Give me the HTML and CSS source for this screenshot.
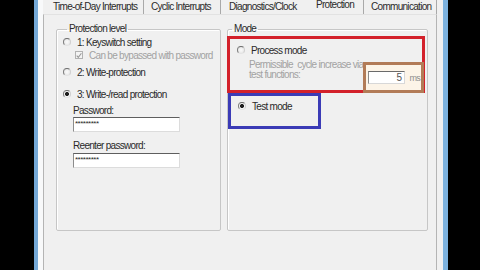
FILE: index.html
```html
<!DOCTYPE html>
<html lang="en">
<head>
    <meta charset="UTF-8">
    <title>Properties - Protection</title>
    <link rel="stylesheet" href="styles.css">
</head>
<body>

    <div class="window">
        <div class="gutter"></div>
        <div class="tabctl">
            <div class="tabs">
                <div class="tab tab-time">Time-of-Day Interrupts</div>
                <div class="tab tab-cyclic">Cyclic Interrupts</div>
                <div class="tab tab-diag">Diagnostics/Clock</div>
                <div class="tab tab-prot active">Protection</div>
                <div class="tab tab-comm">Communication</div>
            </div>

            <div class="page">
                <fieldset class="group group-level">
                    <legend>Protection level</legend>
                    <div class="opt opt-1"><span class="radio"></span>1: Keyswitch setting</div>
                    <div class="opt opt-bypass disabled"><span class="check"><svg width="7" height="7" viewBox="0 0 7 7"><path d="M0.8 3.6 L2.7 5.6 L6.3 0.9" fill="none" stroke="#9a9a9a" stroke-width="1.3"/></svg></span>Can be bypassed with password</div>
                    <div class="opt opt-2"><span class="radio"></span>2: Write-protection</div>
                    <div class="opt opt-3"><span class="radio on"></span>3: Write-/read protection</div>
                    <div class="field-label pw-label">Password:</div>
                    <div class="textbox pw">*********</div>
                    <div class="field-label pw2-label">Reenter password:</div>
                    <div class="textbox pw2">*********</div>
                </fieldset>

                <fieldset class="group group-mode">
                    <legend>Mode</legend>
                    <div class="mark mark-red">
                        <div class="opt opt-process"><span class="radio"></span>Process mode</div>
                        <div class="cycle-row">
                            <div class="cycle-text disabled">Permissible&nbsp; cycle increase via<br>test functions:</div>
                            <div class="mark mark-brown">
                                <div class="num-box">5</div>
                                <span class="unit">ms</span>
                            </div>
                        </div>
                    </div>
                    <div class="mark mark-blue">
                        <div class="opt opt-test"><span class="radio on"></span>Test mode</div>
                    </div>
                </fieldset>
            </div>
        </div>
        <div class="edge"></div>
    </div>

</body>
</html>
```

FILE: styles.css
```css
* {
    box-sizing: border-box;
    margin: 0;
    padding: 0;
}

body {
    width: 480px;
    height: 270px;
    overflow: hidden;
    background-color: #000;
    font-family: "Liberation Sans", Arial, sans-serif;
    font-size: 10px;
    letter-spacing: -0.7px;
    color: #2a2a2a;
}

.window {
    display: flex;
    margin-left: 34px;
    width: 414px;
    height: 270px;
    background-color: #f0f0f0;
    border-left: 4px solid #74a8d6;
    border-right: 5px solid #7db2de;
}

.gutter {
    width: 5px;
    background-color: #f8f9fa;
}

.edge {
    width: 6px;
}

.tabctl {
    width: 394px;
    display: flex;
    flex-direction: column;
}

/* tab strip */
.tabs {
    display: flex;
    height: 14px;
}

.tab {
    height: 14px;
    line-height: 14px;
    border-right: 1px solid #a9a9a9;
    white-space: nowrap;
    overflow: hidden;
}

.tab-time { width: 101px; padding-left: 10px; }
.tab-cyclic { width: 77px; padding-left: 7px; }
.tab-diag { width: 85px; padding-left: 8px; border-right: none; }
.tab-prot { width: 58px; padding-left: 10px; }
.tab-comm { width: 73px; padding-left: 7px; }

.tab.active {
    line-height: 10px;
}

.page {
    flex: 1;
    display: flex;
    gap: 6px;
    padding: 8px 0 0 12px;
    border-left: 1px solid #b4b4b4;
    border-right: 1px solid #b4b4b4;
    border-top: 1px solid #e2e2e2;
}

/* group boxes */
.group {
    height: 208px;
    border: 1px solid #c6c6c6;
    border-radius: 2px;
    box-shadow: inset 1px 1px 0 #fff;
    min-width: 0;
}

.group legend {
    margin-left: 4px;
    padding: 0 2px;
    line-height: 12px;
}

.group-level {
    width: 165px;
    padding-left: 6px;
}

.group-mode {
    width: 201px;
}

.opt {
    display: flex;
    align-items: center;
    gap: 6px;
    height: 12px;
    white-space: nowrap;
}

.opt-1 { margin-top: 1px; }
.opt-bypass { margin-top: 1px; margin-left: 12px; }
.opt-2 { margin-top: 5px; }
.opt-3 { margin-top: 10px; }

.disabled {
    color: #a2a2a2;
}

.radio {
    width: 8px;
    height: 8px;
    border-radius: 50%;
    border: 1px solid;
    border-color: #6c6c6c #cfcfcf #e4e4e4 #7c7c7c;
    background: radial-gradient(circle, #fbfbfb, #e2e2e2);
    flex-shrink: 0;
}

.radio.on {
    background: radial-gradient(circle, #1e1e1e 0 1.7px, #f6f6f6 2.3px);
}

.check {
    width: 8px;
    height: 8px;
    border: 1px solid #b2b2b2;
    background-color: #f4f4f4;
    display: flex;
    align-items: center;
    justify-content: center;
    flex-shrink: 0;
}

.field-label {
    margin-left: 10px;
    height: 12px;
    line-height: 12px;
}

.pw-label { margin-top: 5px; }
.pw2-label { margin-top: 8px; }
.pw2 { margin-top: 1px; }

.textbox {
    margin-left: 10px;
    width: 107px;
    height: 15px;
    background-color: #fff;
    border: 1px solid #dcdcdc;
    border-top-color: #5e5e5e;
    border-left-color: #8c8c8c;
    font-size: 8px;
    letter-spacing: -0.5px;
    line-height: 12px;
    padding-left: 1px;
}

/* highlight frames drawn over the dialog */
.mark {
    border: 3px solid;
}

.mark-red {
    margin-left: -1px;
    margin-top: 1px;
    width: 198px;
    height: 57px;
    border-color: #d3212b;
}

.opt-process {
    margin-top: 5px;
    padding-left: 7px;
}

.cycle-row {
    display: flex;
    align-items: flex-start;
    justify-content: space-between;
    margin-top: 6px;
    margin-right: -2px;
}

.cycle-text {
    margin-top: -2px;
    padding-left: 19px;
    line-height: 10px;
    white-space: nowrap;
}

.mark-brown {
    display: flex;
    align-items: flex-start;
    gap: 4px;
    width: 64px;
    height: 31px;
    border-color: #b27b57;
    background-color: #fcf4e8;
    padding: 6px 0 0 2px;
}

.num-box {
    width: 37px;
    height: 13px;
    background-color: #fff;
    border: 1px solid #d8d8d8;
    border-top-color: #6a6a6a;
    border-left-color: #8a8a8a;
    text-align: right;
    padding-right: 3px;
    line-height: 12px;
    color: #555;
}

.unit {
    margin-top: 1px;
    line-height: 12px;
    font-size: 9px;
    color: #8c8c8c;
}

.mark-blue {
    width: 93px;
    height: 36px;
    border-color: #3b3bb6;
}

.opt-test {
    margin-top: 4px;
    padding-left: 7px;
}
```
